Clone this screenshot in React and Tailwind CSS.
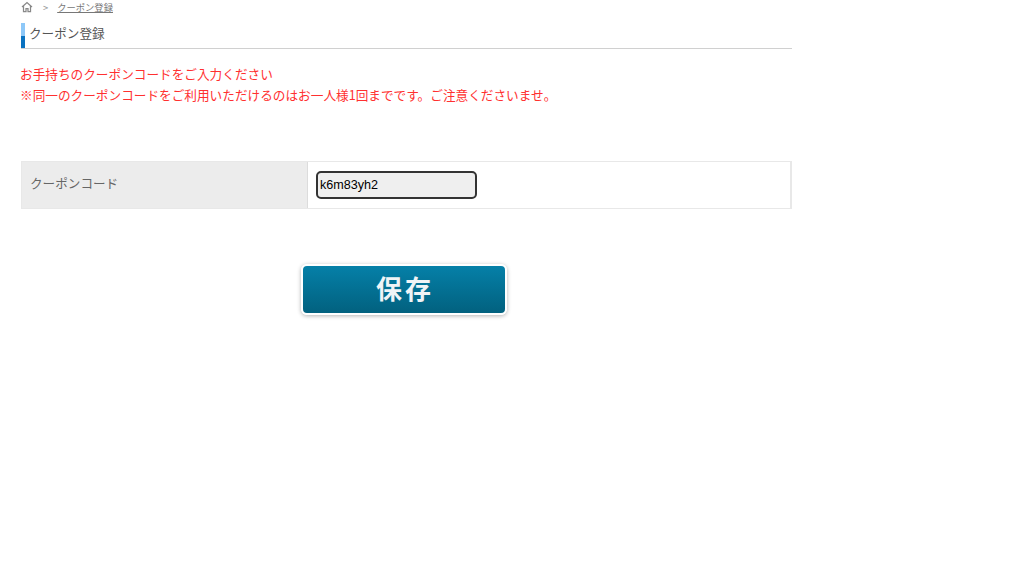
const jp = { fontFamily: '"Noto Sans CJK JP", "Liberation Sans", sans-serif' };

export default function App() {
  return (
    <div className="min-h-[561px] w-[1024px] bg-white" style={jp}>
      <div className="w-[771px] ml-[21px]">
        <div className="flex items-center h-[14px] text-[9.3px] leading-[14px] text-[#777]">
          <svg width="12" height="12" viewBox="0 0 24 24" fill="none" stroke="#888" strokeWidth="2.5" className="shrink-0">
            <path d="M2 12 12 3l10 9" />
            <path d="M5 10v11h5v-6h4v6h5V10" />
          </svg>
          <span className="ml-[10px] text-[#999]">&gt;</span>
          <span className="ml-[9px] underline">クーポン登録</span>
        </div>
        <div className="mt-[9px] h-[26px] flex border-b border-[#d0d0d0]">
          <div className="w-[4px] h-[25px] flex flex-col shrink-0">
            <div className="h-[13px] bg-[#8ec8f8]" />
            <div className="h-[12px] bg-[#0a72c0]" />
          </div>
          <div className="ml-[4px] text-[12.6px] leading-[19px] text-[#555]">クーポン登録</div>
        </div>
        <div className="mt-[14px] text-[12.65px] leading-[21px] text-[#ff3030]">
          <p className="-ml-px">お手持ちのクーポンコードをご入力ください</p>
          <p className="-ml-px">※同一のクーポンコードをご利用いただけるのはお一人様1回までです。ご注意くださいませ。</p>
        </div>
        <div className="mt-[56px] h-[48px] flex border border-[#e8e8e8] border-r-2">
          <div className="w-[286px] bg-[#ececec] border-r border-[#dcdcdc] flex items-center pl-[8px] text-[12.6px] text-[#666] pb-[4px]">
            クーポンコード
          </div>
          <div className="flex-1 flex items-center pl-[8px] pb-[1px]">
            <input
              readOnly
              value="k6m83yh2"
              className="w-[161px] h-[28px] rounded-[5px] border-2 border-[#333] bg-[#efefef] px-[2px] text-[12.6px] text-black outline-none"
              style={{ fontFamily: '"Liberation Sans", sans-serif' }}
            />
          </div>
        </div>
        <div className="mt-[55px] ml-[280px]">
          <button className="w-[206px] h-[51px] rounded-[6px] border-2 border-white shadow-[0_1px_4px_rgba(0,0,0,0.3)] bg-gradient-to-b from-[#0580a8] to-[#02617f] flex items-center justify-center text-[#f0f4f6] text-[26px] font-bold tracking-[3px] pb-[4px] pl-[2px]">
            保存
          </button>
        </div>
      </div>
    </div>
  );
}
